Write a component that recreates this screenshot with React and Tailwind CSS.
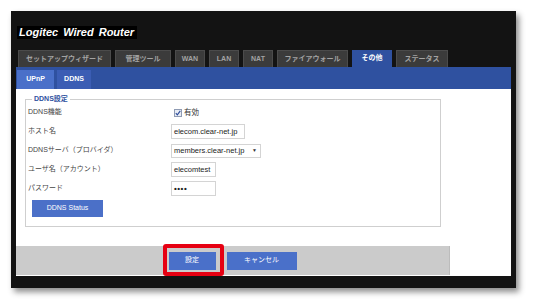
import React from 'react';

const FONT = { fontFamily: '"Liberation Sans", "Noto Sans CJK JP", sans-serif' };

const tabs = [
  { label: 'セットアップウィザード', w: 'w-[93px]' },
  { label: '管理ツール', w: 'w-[56px]' },
  { label: 'WAN', w: 'w-[30px]' },
  { label: 'LAN', w: 'w-[30px]' },
  { label: 'NAT', w: 'w-[30px]' },
  { label: 'ファイアウォール', w: 'w-[71px]' },
  { label: 'その他', w: 'w-[40px]', active: true },
  { label: 'ステータス', w: 'w-[52px]' },
];

function Row({ label, children }) {
  return (
    <div className="flex h-[19px] items-center">
      <div className="w-[143px] text-[7px] text-[#444]">{label}</div>
      <div className="flex items-center">{children}</div>
    </div>
  );
}

function TextBox({ w, children }) {
  return (
    <div className={`${w} flex h-[15px] items-center border border-[#d4d4d4] bg-white pl-[2px] text-[7.5px] text-[#222]`}>
      {children}
    </div>
  );
}

export default function App() {
  return (
    <div className="h-[308px] w-[535px] overflow-hidden bg-white pl-[11px] pt-[11px]" style={FONT}>
      <div className="flex h-[277px] w-[505px] flex-col bg-[#131313] px-[5px] pt-[15px] shadow-[3px_4px_6px_rgba(0,0,0,0.45)]">
        {/* Title */}
        <div className="ml-[1px] flex h-[13px] w-[120px] items-center bg-black pl-[2px]">
          <span className="whitespace-nowrap text-[11px] font-bold italic leading-none text-white [word-spacing:2px]">
            Logitec Wired Router
          </span>
        </div>

        {/* Main tabs */}
        <div className="ml-[2px] mt-[11px] flex h-[17px] gap-[4px]">
          {tabs.map((t) => (
            <div
              key={t.label}
              className={`${t.w} flex items-center justify-center text-[7px] font-bold ${
                t.active
                  ? 'bg-[#2f51a0] text-white'
                  : 'border border-b-0 border-[#4b4b4b] bg-[#3b3b3b] text-[#a3a3a3]'
              }`}
            >
              {t.label}
            </div>
          ))}
        </div>

        {/* Sub tabs band */}
        <div className="flex h-[22px] items-end gap-[3px] bg-[#2f51a0] pl-[1px]">
          <div className="flex h-[19px] w-[37px] items-center justify-center bg-[#4a70c9] text-[7px] font-bold text-white">
            UPnP
          </div>
          <div className="flex h-[19px] w-[34px] items-center justify-center bg-[#3b5db4] text-[7px] font-bold text-white">
            DDNS
          </div>
        </div>

        {/* Content */}
        <div className="flex h-[187px] flex-col bg-white pb-[1px]">
          <div className="relative ml-[9px] mt-[10px] h-[128px] w-[416px] border border-[#cfcfcf] pl-[2px] pt-[3px]">
            <span className="absolute left-[6px] top-[-6px] bg-white px-[2px] text-[7px] font-bold leading-[10px] text-[#2f51a0]">
              DDNS設定
            </span>
            <Row label="DDNS機能">
              <div className="ml-[3px] flex items-center gap-[2px]">
                <svg width="8" height="8" viewBox="0 0 8 8">
                  <rect x="0.5" y="0.5" width="7" height="7" fill="#e8ecf4" stroke="#8f9bb3" />
                  <path d="M1.8 4.2 L3.3 5.8 L6.3 1.9" fill="none" stroke="#2a4a9a" strokeWidth="1.1" />
                </svg>
                <span className="text-[7.5px] text-[#333]">有効</span>
              </div>
            </Row>
            <Row label="ホスト名">
              <TextBox w="w-[74px]">elecom.clear-net.jp</TextBox>
            </Row>
            <Row label="DDNSサーバ（プロバイダ）">
              <div className="flex h-[14px] w-[90px] items-center justify-between border border-[#d4d4d4] bg-white px-[2px] text-[7.5px] text-[#222]">
                <span>members.clear-net.jp</span>
                <span className="mr-[1px] text-[5px] text-[#333]">▼</span>
              </div>
            </Row>
            <Row label="ユーザ名（アカウント）">
              <TextBox w="w-[45px]">elecomtest</TextBox>
            </Row>
            <Row label="パスワード">
              <TextBox w="w-[45px]">
                <span className="text-[8px] font-bold tracking-[0.5px]">••••</span>
              </TextBox>
            </Row>
            <div className="ml-[4px] mt-[2px] flex h-[17px] w-[71px] items-center justify-center bg-[#4b70c8] text-[7px] text-white">
              DDNS Status
            </div>
          </div>

          <div className="mt-[19px] flex h-[29px] w-[434px] items-center justify-center gap-[11px] border-r border-[#bcbcbc] bg-[#cbcbcb]">
            <div className="relative">
              <div className="flex h-[18px] w-[47px] items-center justify-center bg-[#4a70c9] text-[7px] text-white">
                設定
              </div>
              <div className="absolute left-[-6px] top-[-8px] h-[32px] w-[61px] rounded-[3px] border-4 border-[#e60012]" />
            </div>
            <div className="flex h-[18px] w-[70px] items-center justify-center bg-[#4a70c9] text-[7px] text-white">
              キャンセル
            </div>
          </div>
        </div>
      </div>
    </div>
  );
}
